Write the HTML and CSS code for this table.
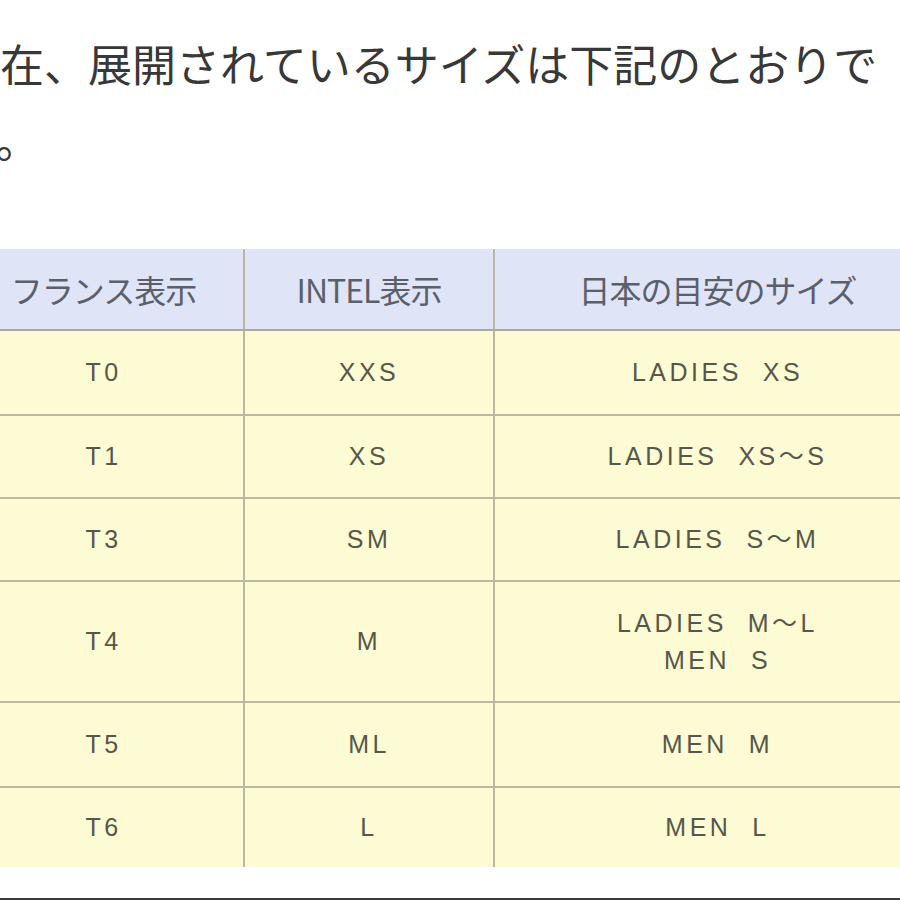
FILE: index.html
```html
<!DOCTYPE html>
<html lang="ja">
<head>
<meta charset="utf-8">
<title>サイズ表</title>
<link rel="stylesheet" href="styles.css">
</head>
<body>
<div class="page">
  <p class="lead">現在、展開されているサイズは下記のとおりです。</p>
  <table class="sizes">
    <thead>
      <tr class="r-head">
        <th>フランス表示</th>
        <th>INTEL表示</th>
        <th>日本の目安のサイズ</th>
      </tr>
    </thead>
    <tbody>
      <tr class="r1"><td>T0</td><td>XXS</td><td>LADIES&nbsp;&nbsp;XS</td></tr>
      <tr class="r2"><td>T1</td><td>XS</td><td>LADIES&nbsp;&nbsp;XS～S</td></tr>
      <tr class="r3"><td>T3</td><td>SM</td><td>LADIES&nbsp;&nbsp;S～M</td></tr>
      <tr class="r4"><td>T4</td><td>M</td><td>LADIES&nbsp;&nbsp;M～L<br>MEN&nbsp;&nbsp;S</td></tr>
      <tr class="r5"><td>T5</td><td>ML</td><td>MEN&nbsp;&nbsp;M</td></tr>
      <tr class="r6"><td>T6</td><td>L</td><td>MEN&nbsp;&nbsp;L</td></tr>
    </tbody>
  </table>
  <div class="rule"></div>
</div>
</body>
</html>
```

FILE: styles.css
```css
html, body {
  margin: 0;
  padding: 0;
  background: #ffffff;
}

.page {
  width: 900px;
  height: 900px;
  overflow: hidden;
  display: flex;
  flex-direction: column;
}

.lead {
  margin: 25px 0 0 -44px;
  width: 924px;
  font-family: "Noto Sans CJK JP", sans-serif;
  font-size: 44px;
  line-height: 76px;
  color: #383838;
  font-weight: 400;
}

.sizes {
  margin: 72px 0 0 -38px;
  width: 972px;
  border-collapse: collapse;
  table-layout: fixed;
  flex: none;
}

.sizes th,
.sizes td {
  border: 2px solid #b9b8a0;
  text-align: center;
  vertical-align: middle;
  padding: 0;
}

.sizes th:nth-child(1), .sizes td:nth-child(1) { width: 279px; }
.sizes th:nth-child(2), .sizes td:nth-child(2) { width: 248px; }
.sizes th:nth-child(3), .sizes td:nth-child(3) { width: 445px; }

.sizes th {
  background: #dfe4f6;
  border-top: none;
  border-bottom-color: #a9aaa4;
  border-left-color: #a8adc0;
  font-family: "Noto Sans CJK JP", sans-serif;
  font-weight: 400;
  font-size: 32px;
  color: #5a5f6c;
  letter-spacing: -1px;
}

.sizes td {
  background: #fdfbd3;
  font-family: "Liberation Sans", "Noto Sans CJK JP", sans-serif;
  font-size: 25px;
  line-height: 37px;
  letter-spacing: 3.5px;
  color: #56574a;
}

.sizes tbody tr:last-child td { border-bottom: none; }

.r-head { height: 81px; }
.r1 { height: 85px; }
.r2 { height: 83px; }
.r3 { height: 83px; }
.r4 { height: 121px; }
.r5 { height: 85px; }
.r6 { height: 80px; }

.rule {
  margin-top: auto;
  height: 2px;
  background: #3c3c3c;
  flex: none;
}
```
